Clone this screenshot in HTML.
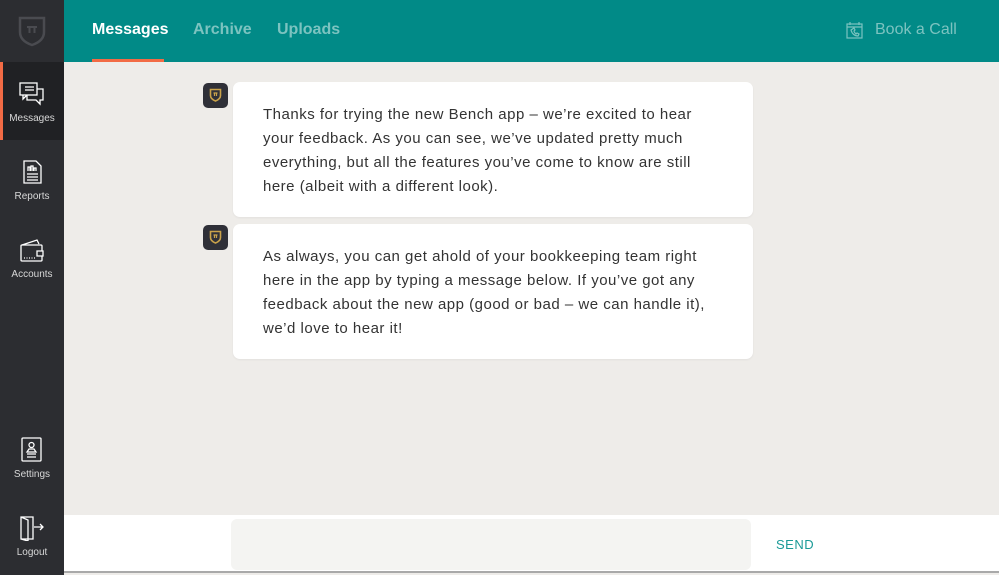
<!DOCTYPE html>
<html><head><meta charset="utf-8"><style>
*{margin:0;padding:0;box-sizing:border-box}
body{width:999px;height:575px;overflow:hidden;font-family:"Liberation Sans",sans-serif;background:#eeece9;position:relative}
.side{position:absolute;left:0;top:0;width:64px;height:575px;background:#2c2d31}
.logo{position:absolute;left:0;top:0;width:64px;height:62px}
.item{position:absolute;left:0;width:64px;height:78px;color:#d8d8d8;font-size:10px;text-align:center}
.item svg{display:block;margin:19px auto 6px}
.item.active{background:#202124;border-left:3px solid #f26b45;padding-right:3px}
.head{position:absolute;left:64px;top:0;width:935px;height:62px;background:#018a87}
.tab{position:absolute;top:21px;font-size:16px;font-weight:bold;color:#7cc3c0}
.tab.on{color:#fff}
.ul{position:absolute;left:28px;top:59px;width:72px;height:3px;background:#f26b45}
.card{position:absolute;left:233px;width:520px;background:#fff;border-radius:7px;padding:21px 30px;font-size:15px;line-height:24px;color:#333;letter-spacing:.5px;box-shadow:0 1px 2px rgba(0,0,0,.05);white-space:nowrap}
.av{position:absolute;left:203px;width:25px;height:25px;background:#2f3038;border-radius:5px}
.av svg{display:block;margin:5px auto}
.bot{position:absolute;left:64px;top:515px;width:935px;height:58px;background:#fff;border-bottom:2px solid #a9a9a9}
.inp{position:absolute;left:167px;top:4px;width:520px;height:51px;background:#f4f4f2;border-radius:6px}
.send{position:absolute;left:712px;top:22px;color:#1a9a97;font-size:13px;letter-spacing:.5px}
</style></head><body>
<div class="side">
 <div class="logo"><svg width="64" height="62"><path d="M20 18h24v14c0 7-6 11-12 13c-6-2-12-6-12-13z" fill="none" stroke="#4a4b50" stroke-width="2.5"/><path d="M27 27h10M29.5 27v6M34.5 27v6" stroke="#4a4b50" stroke-width="2"/></svg></div>
 <div class="item active" style="top:62px"><svg width="26" height="26" viewBox="0 0 26 26" fill="none" stroke="#fff" stroke-width="1.3"><rect x="1" y="2" width="17" height="12"/><path d="M4 14v4l4-4M6 6h9M6 9h9M18 8h6v11h-3v4l-4-4H8v-5"/></svg>Messages</div>
 <div class="item" style="top:140px"><svg width="26" height="26" viewBox="0 0 26 26" fill="none" stroke="#fff" stroke-width="1.3"><path d="M5 2h12l5 5v17H5z"/><path d="M9 12v-4h2v4M12 12V7h2v5M15 12v-3h2v3M8 15h11M8 18h11M8 21h11"/></svg>Reports</div>
 <div class="item" style="top:218px"><svg width="26" height="26" viewBox="0 0 26 26" fill="none" stroke="#fff" stroke-width="1.3"><path d="M3 8l15-5 2 4"/><rect x="2" y="8" width="21" height="16" rx="1"/><path d="M18 14h6v5h-6z" fill="#2c2d31"/><path d="M5 21h11" stroke-dasharray="1 1.5"/></svg>Accounts</div>
 <div class="item" style="top:418px"><svg width="26" height="26" viewBox="0 0 26 26" fill="none" stroke="#fff" stroke-width="1.3"><rect x="3" y="1" width="19" height="23" rx="1"/><circle cx="12.5" cy="8" r="2.5"/><path d="M10 12h5l2 3H8zM8 17h9M8 20h9"/></svg>Settings</div>
 <div class="item" style="top:496px"><svg width="26" height="26" viewBox="0 0 26 26" fill="none" stroke="#fff" stroke-width="1.3"><path d="M2 2h12v22H2zM2 2l7 3v21l-7-2M9 11v4M15 12h9M21 9l3 3-3 3"/></svg>Logout</div>
</div>
<div class="head">
 <div class="tab on" style="left:28px">Messages</div>
 <div class="tab" style="left:129px">Archive</div>
 <div class="tab" style="left:213px">Uploads</div>
 <div class="ul"></div>
 <svg style="position:absolute;left:782px;top:21px" width="17" height="18" viewBox="0 0 17 18" fill="none" stroke="#7cc3c0" stroke-width="1.2"><rect x="1" y="3" width="15" height="14"/><path d="M4 1v3M13 1v3M1 6h15M5 9c1 4 4 6 7 6l1-2-2-1-1 1c-1-1-2-2-2-3l1-1-1-2z"/></svg>
 <div class="tab" style="left:811px;font-weight:normal;font-size:16px;top:21px">Book a Call</div>
</div>
<div class="av" style="top:83px"><svg width="13" height="14" viewBox="0 0 13 14"><path d="M1.5 1.5h10v6c0 3-2.5 4.5-5 5.5c-2.5-1-5-2.5-5-5.5z" fill="none" stroke="#c9a24a" stroke-width="1.6"/><path d="M4.5 5h4M5.5 5v3M7.5 5v3" stroke="#c9a24a" stroke-width="1.2"/></svg></div>
<div class="card" style="top:82px;height:135px">Thanks for trying the new Bench app – we’re excited to hear<br>your feedback. As you can see, we’ve updated pretty much<br>everything, but all the features you’ve come to know are still<br>here (albeit with a different look).</div>
<div class="av" style="top:225px"><svg width="13" height="14" viewBox="0 0 13 14"><path d="M1.5 1.5h10v6c0 3-2.5 4.5-5 5.5c-2.5-1-5-2.5-5-5.5z" fill="none" stroke="#c9a24a" stroke-width="1.6"/><path d="M4.5 5h4M5.5 5v3M7.5 5v3" stroke="#c9a24a" stroke-width="1.2"/></svg></div>
<div class="card" style="top:224px;height:135px">As always, you can get ahold of your bookkeeping team right<br>here in the app by typing a message below. If you’ve got any<br>feedback about the new app (good or bad – we can handle it),<br>we’d love to hear it!</div>
<div class="bot"><div class="inp"></div><div class="send">SEND</div></div>
</body></html>
